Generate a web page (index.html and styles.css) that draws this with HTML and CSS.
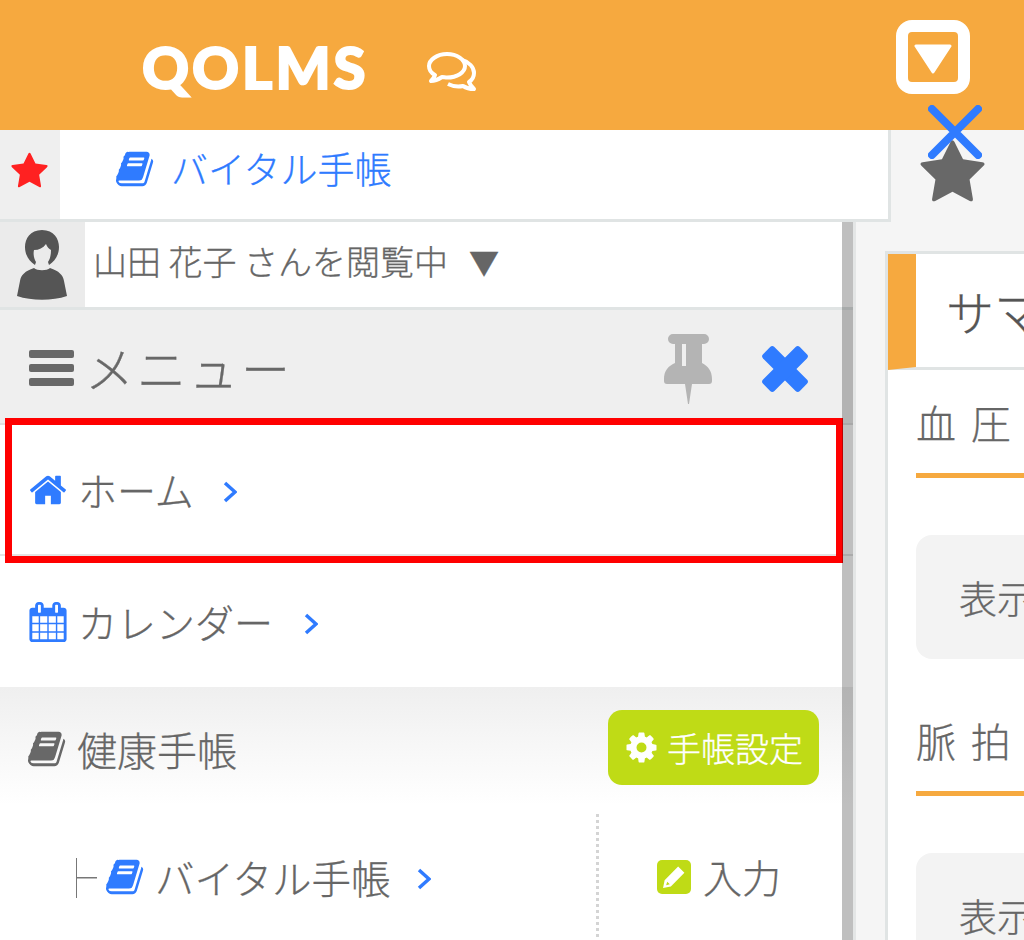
FILE: index.html
```html
<!DOCTYPE html>
<html lang="ja">
<head>
<meta charset="utf-8">
<title>QOLMS</title>
<link rel="stylesheet" href="styles.css">
</head>
<body>
<svg class="defs" width="0" height="0" aria-hidden="true">
  <defs>
    <path id="book" d="M1639 478q40 57 18 129l-275 906q-19 64-76.500 107.500t-122.500 43.500h-923q-77 0-148.500-53.500t-99.500-131.500q-24-67-2-127 0-4 3-27t4-37q1-8-3-21.500t-3-19.500q2-11 8-21t16.500-23.500 16.500-23.500q23-38 45-91.500t30-91.500q3-10 .5-30t-.5-28q3-11 17-28t17-23q21-36 42-92t25-90q1-9-2.500-32t.5-28q4-13 22-30.500t22-22.500q19-26 42.500-84.500t27.500-96.500q1-8-3-25.500t-2-26.500q2-8 9-18t18-23 17-21q8-12 16.500-30.500t15-35 16-36 19.500-32 26.500-23.500 36-11.500 47.500 5.500l-1 3q38-9 51-9h761q74 0 114 56t18 130l-274 906q-36 119-71.500 153.500t-128.500 34.500h-869q-27 0-38 15-11 16-1 43 24 70 144 70h923q29 0 56-15.500t35-41.500l300-987q7-22 5-57 38 15 59 43zm-1064 2q-4 13 2 22.500t20 9.500h608q13 0 25.500-9.500t16.500-22.500l21-64q4-13-2-22.500t-20-9.500h-608q-13 0-25.500 9.500t-16.500 22.500zm-83 256q-4 13 2 22.500t20 9.500h608q13 0 25.500-9.500t16.500-22.500l21-64q4-13-2-22.500t-20-9.500h-608q-13 0-25.500 9.500t-16.500 22.500z"/>
    <path id="star" d="M1728 647q0 22-26 48l-363 354 86 500q1 7 1 20 0 21-10.500 35.500t-30.500 14.500q-19 0-40-12l-449-236-449 236q-22 12-40 12-21 0-31.500-14.500t-10.500-35.500q0-6 2-20l86-500-364-354q-25-27-25-48 0-37 56-46l502-73 225-455q19-41 49-41t49 41l225 455 502 73q56 9 56 46z"/>
    <path id="chev" d="M2 2l10 9-10 9"/>
  </defs>
</svg>

<header class="topbar">
  <div class="logo">QOLMS</div>
  <svg class="chat" viewBox="0 0 52 42" aria-hidden="true">
    <path class="chat-back" d="M36 9c7 2 12 7 12 13 0 4-2 7-5 9 1 3 3 5 5 7-4 0-8-1-11-3-5 1-11 0-15-2"/>
    <path class="chat-front" d="M21 3C11 3 3 9 3 15c0 4 2 7 6 9-1 3-2 4-4 6 4 0 8-2 11-4 2 0 3 .5 5 .5 10 0 18-5 18-11.500S31 3 21 3z"/>
  </svg>
  <div class="toggle">
    <svg class="toggle-tri" viewBox="0 0 38 30" aria-hidden="true"><path d="M2 2h34L19 28z"/></svg>
  </div>
</header>

<svg class="close-thin" viewBox="0 0 54 54" aria-hidden="true">
  <path d="M4 4l46 46M50 4L4 50"/>
</svg>

<div class="favrow">
  <div class="favbar">
    <div class="favcell">
      <svg class="ico-star-red" viewBox="0 0 1792 1792" aria-hidden="true"><use href="#star"/></svg>
    </div>
    <svg class="ico-book ico-blue fav-book" viewBox="0 0 1792 1792" aria-hidden="true"><use href="#book"/></svg>
    <span class="fav-text">バイタル手帳</span>
  </div>
  <svg class="ico-star-gray" viewBox="0 0 1792 1792" aria-hidden="true"><use href="#star"/></svg>
</div>

<div class="main">
  <aside class="sidebar">
    <div class="userrow">
      <div class="avatar">
        <svg class="avatar-svg" viewBox="0 0 50 70" aria-hidden="true">
          <path d="M25 0C13 0 8 9 8 17c0 8 4 14 10 18l1-3c-2-3-3-8-2-12 5 0 9-2 12-6 1 3 3 5 5 6 0 5-1 9-3 12l1 3c6-4 10-10 10-18C42 9 37 0 25 0z"/>
          <path d="M17 38c3 3 13 3 16 0 9 3 13 7 14 13l3 15c-15 5-35 5-50 0l3-15c1-6 5-10 14-13z"/>
        </svg>
      </div>
      <span class="username">山田 花子 さんを閲覧中</span>
      <span class="usertri">▼</span>
    </div>

    <div class="menuhead">
      <div class="burger"><i></i><i></i><i></i></div>
      <span class="menutitle">メニュー</span>
      <svg class="pin" viewBox="0 0 48 70" aria-hidden="true">
        <path d="M9 0h31a5 5 0 0 1 0 10h-2v19c6 3 10 8 10 16v2a3 3 0 0 1-3 3H28l-3 20h-1l-3-20H3a3 3 0 0 1-3-3v-2c0-8 4-13 11-16V10H9A5 5 0 0 1 9 0zM18 10v22h4V10z" fill-rule="evenodd"/>
      </svg>
      <svg class="close-fat" viewBox="0 0 48 48" aria-hidden="true">
        <rect x="-2" y="16" width="52" height="16" rx="3" transform="rotate(45 24 24)"/>
        <rect x="-2" y="16" width="52" height="16" rx="3" transform="rotate(-45 24 24)"/>
      </svg>
    </div>

    <div class="navrow navrow-home">
      <svg class="nav-ico ico-blue" viewBox="0 0 1792 1792" aria-hidden="true"><path d="M1472 992v480q0 26-19 45t-45 19h-384v-384h-256v384h-384q-26 0-45-19t-19-45v-480q0-1 .5-3t.5-3l575-474 575 474q1 2 1 6zm223-69l-62 74q-8 9-21 11h-3q-13 0-21-7l-692-577-692 577q-12 8-24 7-13-2-21-11l-62-74q-8-10-7-23.500t11-21.500l719-599q32-26 76-26t76 26l244 204v-195q0-14 9-23t23-9h192q14 0 23 9t9 23v408l219 182q10 8 11 21.500t-7 23.500z"/></svg>
      <span class="nav-text">ホーム</span>
      <svg class="chev" viewBox="0 0 14 22" aria-hidden="true"><use href="#chev"/></svg>
      <div class="highlight"></div>
    </div>

    <div class="navrow">
      <svg class="nav-ico ico-blue" viewBox="0 0 1792 1792" aria-hidden="true"><path d="M192 1664h288v-288h-288v288zm352 0h320v-288h-320v288zm-352-352h288v-320h-288v320zm352 0h320v-320h-320v320zm-352-384h288v-288h-288v288zm736 736h320v-288h-320v288zm-384-736h320v-288h-320v288zm768 736h288v-288h-288v288zm-384-352h320v-320h-320v320zm-352-864v-288q0-13-9.500-22.500t-22.500-9.500h-64q-13 0-22.500 9.500t-9.500 22.500v288q0 13 9.500 22.500t22.500 9.500h64q13 0 22.500-9.500t9.500-22.500zm736 864h288v-320h-288v320zm-384-384h320v-288h-320v288zm384 0h288v-288h-288v288zm32-480v-288q0-13-9.500-22.500t-22.500-9.500h-64q-13 0-22.500 9.500t-9.500 22.500v288q0 13 9.500 22.500t22.500 9.500h64q13 0 22.500-9.500t9.500-22.500zm384-64v1280q0 52-38 90t-90 38h-1408q-52 0-90-38t-38-90v-1280q0-52 38-90t90-38h128v-96q0-66 47-113t113-47h64q66 0 113 47t47 113v96h384v-96q0-66 47-113t113-47h64q66 0 113 47t47 113v96h128q52 0 90 38t38 90z"/></svg>
      <span class="nav-text">カレンダー</span>
      <svg class="chev" viewBox="0 0 14 22" aria-hidden="true"><use href="#chev"/></svg>
    </div>

    <div class="healthhead">
      <svg class="nav-ico ico-gray" viewBox="0 0 1792 1792" aria-hidden="true"><use href="#book"/></svg>
      <span class="health-text">健康手帳</span>
      <div class="setbtn">
        <svg class="cog" viewBox="0 0 1792 1792" aria-hidden="true"><path d="M1152 896q0-106-75-181t-181-75-181 75-75 181 75 181 181 75 181-75 75-181zm512-109v222q0 12-8 23t-20 13l-185 28q-19 54-39 91 35 50 107 138 10 12 10 25t-9 23q-27 37-99 108t-94 71q-12 0-26-9l-138-108q-44 23-91 38-16 136-29 186-7 28-36 28h-222q-14 0-24.500-8.500t-11.500-21.500l-28-184q-49-16-90-37l-141 107q-10 9-25 9-14 0-25-11-126-114-165-168-7-10-7-23 0-12 8-23 15-21 51-66.500t54-70.500q-27-50-41-99l-183-27q-13-2-21-12.500t-8-23.500v-222q0-12 8-23t19-13l186-28q14-46 39-92-40-57-107-138-10-12-10-24 0-10 9-23 26-36 98.500-107.500t94.500-71.500q13 0 26 10l138 107q44-23 91-38 16-136 29-186 7-28 36-28h222q14 0 24.500 8.500t11.500 21.500l28 184q49 16 90 37l142-107q9-9 24-9 13 0 25 10 129 119 165 170 7 8 7 22 0 12-8 23-15 21-51 66.500t-54 70.500q26 50 41 98l183 28q13 2 21 12.500t8 23.500z"/></svg>
        <span>手帳設定</span>
      </div>
    </div>

    <div class="subrow">
      <div class="sub-left">
        <span class="tree"></span>
        <svg class="nav-ico ico-blue sub-book" viewBox="0 0 1792 1792" aria-hidden="true"><use href="#book"/></svg>
        <span class="sub-text">バイタル手帳</span>
        <svg class="chev" viewBox="0 0 14 22" aria-hidden="true"><use href="#chev"/></svg>
      </div>
      <div class="sub-right">
        <span class="editbox">
          <svg class="pencil" viewBox="0 0 24 24" aria-hidden="true"><path d="M15.500 2.500l6 6-13 13-7.500 1.500 1.500-7.500zM5 17l-1 3.500 3.500-1z" fill-rule="evenodd"/></svg>
        </span>
        <span class="input-text">入力</span>
      </div>
    </div>
  </aside>

  <section class="card">
    <h1 class="card-title">サマリー</h1>
    <div class="card-body">
      <div class="section">
        <h2 class="section-title">血 圧</h2>
        <div class="section-box">表示する項目がありません</div>
      </div>
      <div class="section">
        <h2 class="section-title">脈 拍</h2>
        <div class="section-box">表示する項目がありません</div>
      </div>
    </div>
  </section>
</div>
</body>
</html>
```
FILE: styles.css
```css
* { box-sizing: border-box; }
html, body { margin: 0; height: 940px; overflow: hidden; }
body {
  position: relative;
  background: #f5f5f5;
  color: #666;
  font-family: "Noto Sans CJK JP", "Noto Sans", sans-serif;
  font-weight: 300;
  -webkit-text-stroke: 0.3px currentColor;
}
.defs { position: absolute; }

.topbar {
  height: 130px;
  background: #f6a93f;
  display: flex;
  align-items: center;
  padding-left: 142px;
}
.logo {
  font-family: Lato, sans-serif;
  font-weight: 900;
  font-size: 58px;
  line-height: 1;
  color: #fff;
  -webkit-text-stroke: 2px #fff;
  letter-spacing: 3px;
  width: 231px;
  margin-top: 4px;
}
.chat { width: 52px; height: 42px; margin: 14px 0 0 53px; }
.chat-front, .chat-back { fill: none; stroke: #fff; stroke-width: 4; stroke-linejoin: round; }
.toggle {
  margin-left: auto;
  margin-right: 54px;
  align-self: flex-start;
  margin-top: 20px;
  width: 74px;
  height: 74px;
  border: 12px solid #fff;
  border-radius: 16px;
  display: flex;
  align-items: center;
  justify-content: center;
}
.toggle-tri { width: 38px; height: 30px; fill: #fff; stroke: #fff; stroke-width: 3; stroke-linejoin: round; margin-top: 4px; }
.close-thin {
  position: absolute;
  left: 928px;
  top: 105px;
  width: 54px;
  height: 54px;
  fill: none;
  stroke: #2f7bff;
  stroke-width: 8;
  stroke-linecap: round;
  z-index: 2;
}

.favrow { display: flex; align-items: flex-start; height: 92px; }
.favbar {
  width: 891px;
  height: 92px;
  background: #fff;
  border-right: 3px solid #e0e4e4;
  border-bottom: 3px solid #e0e4e4;
  display: flex;
  align-items: center;
}
.favcell {
  width: 60px;
  height: 100%;
  background: #efefef;
  display: flex;
  align-items: center;
  justify-content: center;
  padding-bottom: 6px;
}
.ico-star-red { width: 39px; height: 39px; fill: #ff2121; margin-left: -1px; }
.ico-star-gray { width: 69px; height: 69px; fill: #686868; margin-left: 27px; margin-top: 9px; }
.ico-blue { fill: #2f7bff; }
.ico-gray { fill: #686868; }
.fav-book { width: 40px; height: 40px; margin-left: 56px; margin-bottom: 11px; }
.fav-text { font-size: 37px; line-height: 1; color: #2f7bff; margin-left: 15px; margin-bottom: 12px; }

.main { display: flex; align-items: flex-start; }
.sidebar {
  position: relative;
  width: 856px;
  height: 718px;
  background: #fff;
  border-right: 3px solid #e4e6e6;
  flex: none;
}
.sidebar::after {
  content: "";
  position: absolute;
  top: 0;
  right: 0;
  bottom: 0;
  width: 11px;
  background: rgba(0, 0, 0, 0.25);
}
.userrow {
  height: 88px;
  border-bottom: 3px solid #e0e4e4;
  display: flex;
  align-items: center;
}
.avatar {
  width: 85px;
  height: 100%;
  background: #ebebeb;
  display: flex;
  align-items: center;
  justify-content: center;
}
.avatar-svg { width: 50px; height: 70px; fill: #555; margin-left: -1px; }
.username { font-size: 34px; line-height: 1; margin: -8px 0 0 8px; white-space: nowrap; }
.usertri { font-size: 30px; line-height: 1; margin: -8px 0 0 21px; color: #666; }

.menuhead {
  height: 115px;
  background: #efefef;
  border-bottom: 2px solid #e0e0e0;
  display: flex;
  align-items: center;
  padding-left: 29px;
}
.burger { display: flex; flex-direction: column; gap: 6px; width: 45px; margin-top: 2px; }
.burger i { display: block; height: 8px; background: #686868; border-radius: 2px; }
.menutitle { font-size: 49px; letter-spacing: 3px; line-height: 1; margin-left: 11px; color: #686868; }
.pin { width: 48px; height: 70px; fill: #b4b4b4; margin-left: auto; margin-top: 4px; }
.close-fat { width: 48px; height: 48px; fill: #2f7bff; margin: 5px 44px 0 49px; }

.navrow {
  position: relative;
  height: 131px;
  display: flex;
  align-items: center;
  padding-left: 28px;
}
.navrow-home { border-bottom: 2px solid #e4e4e4; }
.navrow-home .chev { margin-left: 29px; }
.nav-ico { width: 40px; height: 40px; flex: none; }
.nav-text { font-size: 39px; line-height: 1; margin-left: 10px; white-space: nowrap; }
.chev { width: 14px; height: 22px; fill: none; stroke: #2f7bff; stroke-width: 3.500; margin: 4px 0 0 31px; flex: none; }
.highlight {
  position: absolute;
  left: 5px;
  right: 10px;
  top: -7px;
  bottom: -9px;
  border: 7px solid #f00;
  pointer-events: none;
}

.healthhead {
  height: 118px;
  background: linear-gradient(#efefef, #fff);
  display: flex;
  align-items: center;
  padding: 6px 0 0 28px;
}
.health-text { font-size: 40px; line-height: 1; margin-left: 9px; }
.setbtn {
  margin: -3px 34px 0 auto;
  width: 211px;
  height: 75px;
  border-radius: 14px;
  background: #bfdb16;
  color: #fff;
  font-size: 34px;
  display: flex;
  align-items: center;
  justify-content: center;
  gap: 8px;
}
.cog { width: 35px; height: 35px; fill: #fff; }

.subrow { display: flex; margin-top: 9px; height: 123px; }
.sub-left {
  width: 599px;
  display: flex;
  align-items: center;
  padding: 2px 0 0 76px;
  border-right: 3px dotted #d4d4d4;
}
.sub-left .chev { margin-left: 27px; }
.tree {
  width: 21px;
  height: 40px;
  flex: none;
  margin-top: 2px;
  border-left: 1.500px solid #777;
  background: linear-gradient(#777, #777) left center / 100% 1.500px no-repeat;
}
.sub-book { margin-left: 9px; }
.sub-text { font-size: 39.500px; line-height: 1; margin-left: 9px; white-space: nowrap; }
.sub-right { display: flex; align-items: center; padding: 2px 0 0 58px; }
.editbox {
  width: 34px;
  height: 34px;
  border-radius: 5px;
  background: #bfdb16;
  display: flex;
  align-items: center;
  justify-content: center;
}
.pencil { width: 25px; height: 25px; fill: #fff; }
.input-text { font-size: 39px; line-height: 1; margin-left: 12px; }

.card {
  flex: none;
  width: 200px;
  margin: 29px 0 0 29px;
  height: 700px;
  background: #fff;
  border: 3px solid #e0e4e4;
  border-right: 0;
  border-bottom: 0;
  overflow: hidden;
}
.card-title {
  margin: 0;
  height: 116px;
  width: 400px;
  border-left: 28px solid #f6a93f;
  border-bottom: 3px solid #e0e4e4;
  font-weight: 300;
  font-size: 48px;
  line-height: 113px;
  padding-left: 30px;
  color: #555;
  white-space: nowrap;
}
.card-body { padding-left: 28px; }
.section { width: 400px; height: 318px; padding-top: 27px; }
.section-title {
  margin: 0;
  height: 81px;
  border-bottom: 5px solid #f6a93f;
  font-weight: 300;
  font-size: 40px;
  line-height: 50px;
  color: #666;
  letter-spacing: 3px;
}
.section-box {
  margin-top: 57px;
  height: 124px;
  border-radius: 16px;
  background: #f3f3f3;
  font-size: 38px;
  line-height: 124px;
  padding-left: 43px;
  white-space: nowrap;
  overflow: hidden;
  color: #666;
}
```
